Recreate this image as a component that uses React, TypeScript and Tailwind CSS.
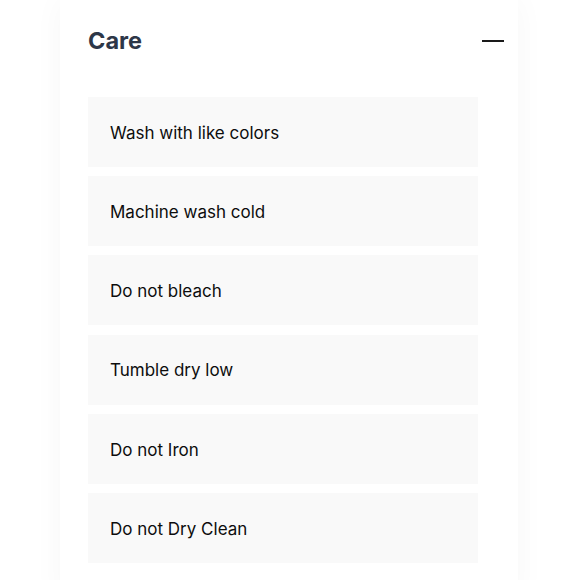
const careItems = [
  "Wash with like colors",
  "Machine wash cold",
  "Do not bleach",
  "Tumble dry low",
  "Do not Iron",
  "Do not Dry Clean",
];

export default function App() {
  return (
    <div className="w-[580px] h-[580px] overflow-hidden bg-white font-['Inter',sans-serif]">
      <div className="ml-[60px] w-[458px] min-h-[600px] bg-white shadow-[0_0_30px_rgba(0,0,0,0.035)] pl-[28px] pr-[14px] pt-[24px]">
        <div className="flex items-center justify-between">
          <h2 className="text-[23.5px] leading-[34px] font-bold text-[#2d3748]">Care</h2>
          <span className="block w-[22px] h-[2px] bg-[#1a1a1a]" />
        </div>
        <ul className="mt-[39px] flex flex-col gap-[9.2px] w-[390px]">
          {careItems.map((item) => (
            <li
              key={item}
              className="h-[70px] flex items-center pl-[22px] pt-[3px] bg-[#f9f9f9] text-[17px] text-[#0d0d0d]"
            >
              {item}
            </li>
          ))}
        </ul>
      </div>
    </div>
  );
}
